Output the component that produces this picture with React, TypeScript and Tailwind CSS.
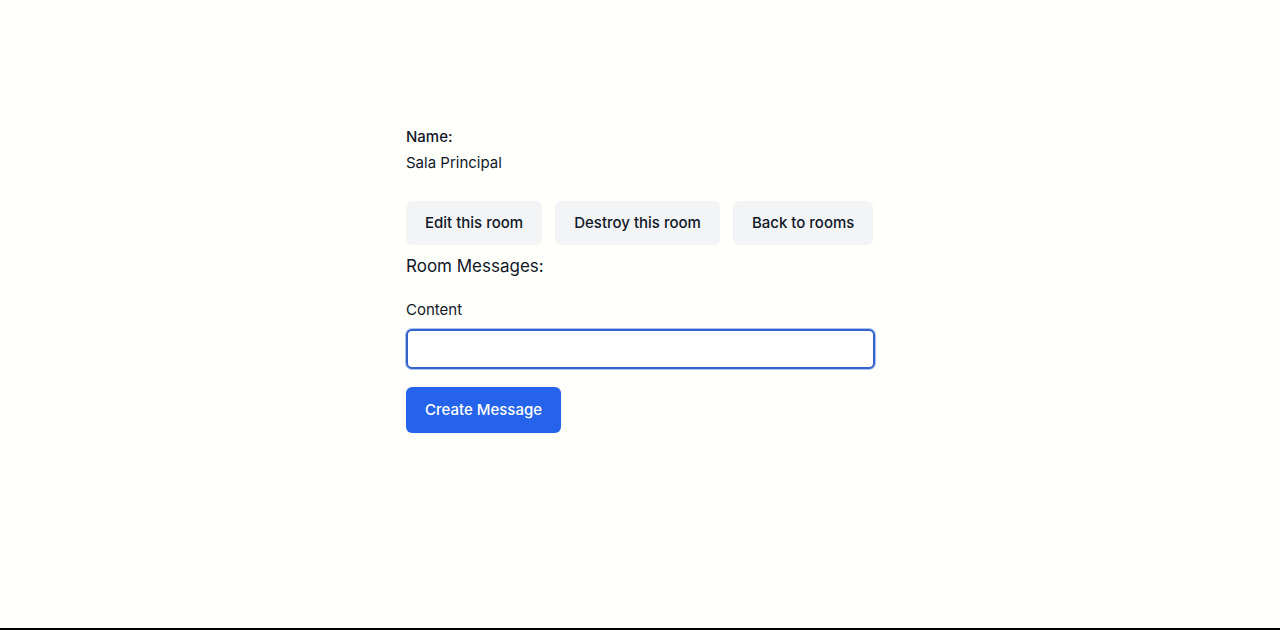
import React from "react";

const App = () => {
  return (
    <div
      className="h-screen flex flex-col bg-[#fffffb] text-gray-900 border-b-2 border-black"
      style={{ fontFamily: "Inter, 'Noto Sans', sans-serif" }}>
      <main className="flex-1 pt-[126px]">
        <div className="w-[470px] mx-auto pl-px">
          {/* Room details */}
          <div className="text-[15px]">
            <p className="font-medium leading-[22px]">Name:</p>
            <p className="mt-1 leading-[22px]">Sala Principal</p>
          </div>

          {/* Actions */}
          <div className="flex gap-[13px] mt-[27px]">
            <a className="rounded-md px-[19px] py-2.5 bg-gray-100 font-medium text-[15px] leading-6">
              Edit this room
            </a>
            <a className="rounded-md px-[19px] py-2.5 bg-gray-100 font-medium text-[15px] leading-6">
              Destroy this room
            </a>
            <a className="rounded-md px-[19px] py-2.5 bg-gray-100 font-medium text-[15px] leading-6">
              Back to rooms
            </a>
          </div>

          <h2 className="text-[17px] leading-6 mt-[9px]">Room Messages:</h2>

          {/* New message form */}
          <form className="mt-[20px]">
            <label className="block text-[15px] leading-6">Content</label>
            <input
              type="text"
              className="block w-full mt-[7px] h-10 rounded-md border-2 border-[#3563c9] ring-1 ring-[#a9c2f2] px-3 py-2 bg-white outline-none"
            />
            <button
              type="button"
              className="mt-[18px] rounded-md px-[19px] py-[11px] bg-[#2563eb] text-white font-medium text-[15px] leading-6">
              Create Message
            </button>
          </form>
        </div>
      </main>
    </div>
  );
};

export default App;
